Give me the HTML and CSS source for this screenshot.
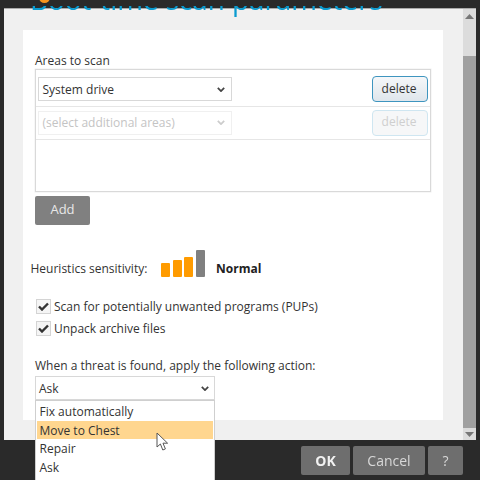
FILE: index.html
```html
<!DOCTYPE html>
<html lang="en">
<head>
<meta charset="utf-8">
<title>Boot-time scan parameters</title>
<link rel="stylesheet" href="styles.css">
</head>
<body>
<div class="window">
  <div class="logo-dot"></div>
  <div class="title-clip"><h1 class="title">Boot-time scan parameters</h1></div>
  <div class="panel">
    <div class="scroll-area">
      <div class="card">
        <div class="areas-label">Areas to scan</div>
        <div class="areas-box">
          <div class="area-row first">
            <div class="select area-select"><span>System drive</span>
              <svg class="chev" width="8" height="5" viewBox="0 0 10 6"><path d="M1 1l4 4 4-4" fill="none" stroke="#444" stroke-width="2.2"/></svg>
            </div>
            <button class="delete">delete</button>
          </div>
          <div class="area-row second">
            <div class="select area-select disabled"><span>(select additional areas)</span>
              <svg class="chev" width="8" height="5" viewBox="0 0 10 6"><path d="M1 1l4 4 4-4" fill="none" stroke="#ccc" stroke-width="2.2"/></svg>
            </div>
            <button class="delete disabled">delete</button>
          </div>
        </div>
        <button class="add">Add</button>
        <div class="heuristics">
          <span class="heur-label">Heuristics sensitivity:</span>
          <div class="bars">
            <i class="bar b1"></i><i class="bar b2"></i><i class="bar b3"></i><i class="bar b4"></i>
          </div>
          <strong class="heur-value">Normal</strong>
        </div>
        <div class="check-row one">
          <span class="check"><svg width="11" height="9" viewBox="0 0 11 9"><path d="M1 4.5l3 3 6-6" fill="none" stroke="#333" stroke-width="2.4"/></svg></span>
          <span>Scan for potentially unwanted programs (PUPs)</span>
        </div>
        <div class="check-row two">
          <span class="check"><svg width="11" height="9" viewBox="0 0 11 9"><path d="M1 4.5l3 3 6-6" fill="none" stroke="#333" stroke-width="2.4"/></svg></span>
          <span>Unpack archive files</span>
        </div>
        <div class="action-label">When a threat is found, apply the following action:</div>
        <div class="action-wrap">
          <div class="select action-select"><span>Ask</span>
            <svg class="chev" width="8" height="5" viewBox="0 0 10 6"><path d="M1 1l4 4 4-4" fill="none" stroke="#444" stroke-width="2.2"/></svg>
          </div>
          <ul class="menu">
            <li>Fix automatically</li>
            <li class="active">Move to Chest</li>
            <li>Repair</li>
            <li>Ask</li>
          </ul>
          <svg class="cursor" width="13" height="20" viewBox="0 0 13 20"><path d="M1 1v14l3.4-3 2.4 6 2.6-1.1-2.4-5.7h4.6z" fill="#fff" stroke="#555" stroke-width="1"/></svg>
        </div>
      </div>
    </div>
    <div class="scrollbar">
      <svg class="arrow" width="9" height="5" viewBox="0 0 9 5"><path d="M0 5l4.5-5 4.5 5z" fill="#777"/></svg>
      <div class="thumb"></div>
      <svg class="arrow" width="9" height="5" viewBox="0 0 9 5"><path d="M0 0l4.5 5 4.5-5z" fill="#777"/></svg>
    </div>
  </div>
  <div class="footer">
    <button class="foot ok">OK</button>
    <button class="foot cancel">Cancel</button>
    <button class="foot help">?</button>
  </div>
</div>
</body>
</html>
```

FILE: styles.css
```css
* { box-sizing: border-box; }
html, body { margin: 0; padding: 0; }
body {
  width: 480px;
  height: 480px;
  overflow: hidden;
  background: #2a2a2a;
  font-family: "Open Sans", "Noto Sans", sans-serif;
  font-size: 12px;
  color: #333;
}
.window {
  position: relative;
  width: 480px;
  height: 480px;
  padding-top: 8px;
  overflow: hidden;
  filter: blur(0.35px);
}
.logo-dot {
  position: absolute;
  left: 39px;
  top: -8px;
  width: 11px;
  height: 11px;
  border-radius: 50%;
  background: #f7941d;
}
.title-clip {
  position: absolute;
  left: 20px;
  top: 6px;
  width: 430px;
  height: 12px;
  overflow: hidden;
  z-index: 2;
}
.title {
  margin: -31px 0 0 10px;
  font-size: 27.8px;
  line-height: 48px;
  font-weight: 400;
  color: #0a9bd0;
  white-space: nowrap;
}
.panel {
  display: flex;
  height: 432px;
  margin: 0 4px;
  background: #f0f0f0;
  border-top: 1px solid #aaa;
}
.scroll-area {
  flex: 1;
  padding: 21px 20px 20px 19px;
}
.card {
  height: 390px;
  padding: 22px 12px 0;
  background: #fff;
}
.areas-label { line-height: 18px; margin-bottom: -1px; }
.areas-box {
  height: 123px;
  border: 1px solid #d9d9d9;
  box-shadow: 0 0 0 0.5px #eee;
}
.area-row {
  display: flex;
  align-items: center;
  justify-content: space-between;
  padding: 0 2px 0 2px;
  border-bottom: 1px solid #e6e6e6;
}
.area-row.first { height: 37px; padding-top: 1px; }
.area-row.second { height: 33px; }
.select {
  display: flex;
  align-items: center;
  justify-content: space-between;
  background: #fff;
  border: 1px solid #d8d8d8;
}
.area-select {
  width: 194px;
  height: 24px;
  padding: 1px 6px 0 3.5px;
  border-width: 1.5px;
}
.select.disabled { color: #c4c4c4; border-color: #f0f0f0; padding-top: 0; padding-bottom: 2px; }
.delete {
  width: 56px;
  height: 26px;
  padding: 0 2px 0 0;
  border: 1px solid #3e95bf;
  border-radius: 4px;
  background: linear-gradient(#f5f7f9, #dfe6ec);
  font: inherit;
  color: #333;
}
.delete.disabled {
  padding-bottom: 3px;
  border-color: #cfe6f1;
  background: #f6f7f8;
  color: #cfcfcf;
}
.add {
  display: block;
  width: 55px;
  height: 29px;
  margin-top: 4px;
  padding: 0 0 3px;
  border: 0;
  border-radius: 2px;
  background: #808080;
  color: #e8e8e8;
  font: inherit;
  font-size: 13px;
}
.heuristics {
  display: flex;
  align-items: flex-end;
  height: 28px;
  margin: 24px 0 0 -4.5px;
}
.heur-label { width: 130.5px; line-height: 16px; }
.bars {
  display: flex;
  align-items: flex-end;
  gap: 2.5px;
  width: 55px;
  height: 28px;
}
.bar {
  display: block;
  width: 9px;
  border-radius: 1px;
  background: #ff9b00;
}
.b1 { height: 14px; }
.b2 { height: 17px; }
.b3 { height: 20px; }
.b4 { height: 27px; background: #808080; }
.heur-value { line-height: 16px; color: #222; font-weight: 700; }
.check-row {
  display: flex;
  align-items: center;
  gap: 3px;
  height: 15px;
  margin-left: 1px;
}
.check-row.one { margin-top: 22px; }
.check-row.two { margin-top: 7px; }
.check {
  display: flex;
  align-items: center;
  justify-content: center;
  width: 15px;
  height: 15px;
  background: #f5f5f5;
  border: 1px solid #d4d4d4;
}
.action-label { margin-top: 21px; line-height: 18px; }
.action-wrap { position: relative; margin-top: 1px; width: 180px; }
.action-select {
  height: 24px;
  padding: 0 5px 0 3px;
}
.menu {
  position: absolute;
  left: 0;
  top: 24px;
  width: 180px;
  height: 90px;
  margin: 0;
  padding: 1px 1px 0;
  list-style: none;
  background: #fff;
  border: 1px solid #cfcfcf;
  z-index: 3;
}
.menu li {
  height: 18.67px;
  line-height: 20px;
  padding-left: 2.5px;
}
.menu li.active { background: #ffd68f; }
.cursor {
  position: absolute;
  left: 121px;
  top: 56px;
  z-index: 4;
}
.scrollbar {
  display: flex;
  flex-direction: column;
  align-items: center;
  justify-content: space-between;
  width: 13px;
  padding: 5px 0 3px;
  background: #dcdcdc;
}
.thumb {
  flex: 1;
  width: 13px;
  margin: 37px 0 4px;
  background: #a0a0a0;
}
.footer {
  display: flex;
  justify-content: flex-end;
  gap: 3px;
  padding: 6px 17px 0 0;
}
.foot {
  height: 29px;
  padding: 0;
  border: 0;
  border-radius: 2px;
  background: #6e6e6e;
  color: #d8d8d8;
  font: inherit;
  font-size: 14px;
}
.ok { width: 49px; font-weight: 700; color: #f2f2f2; }
.cancel { width: 72px; }
.help { width: 35px; }
```
